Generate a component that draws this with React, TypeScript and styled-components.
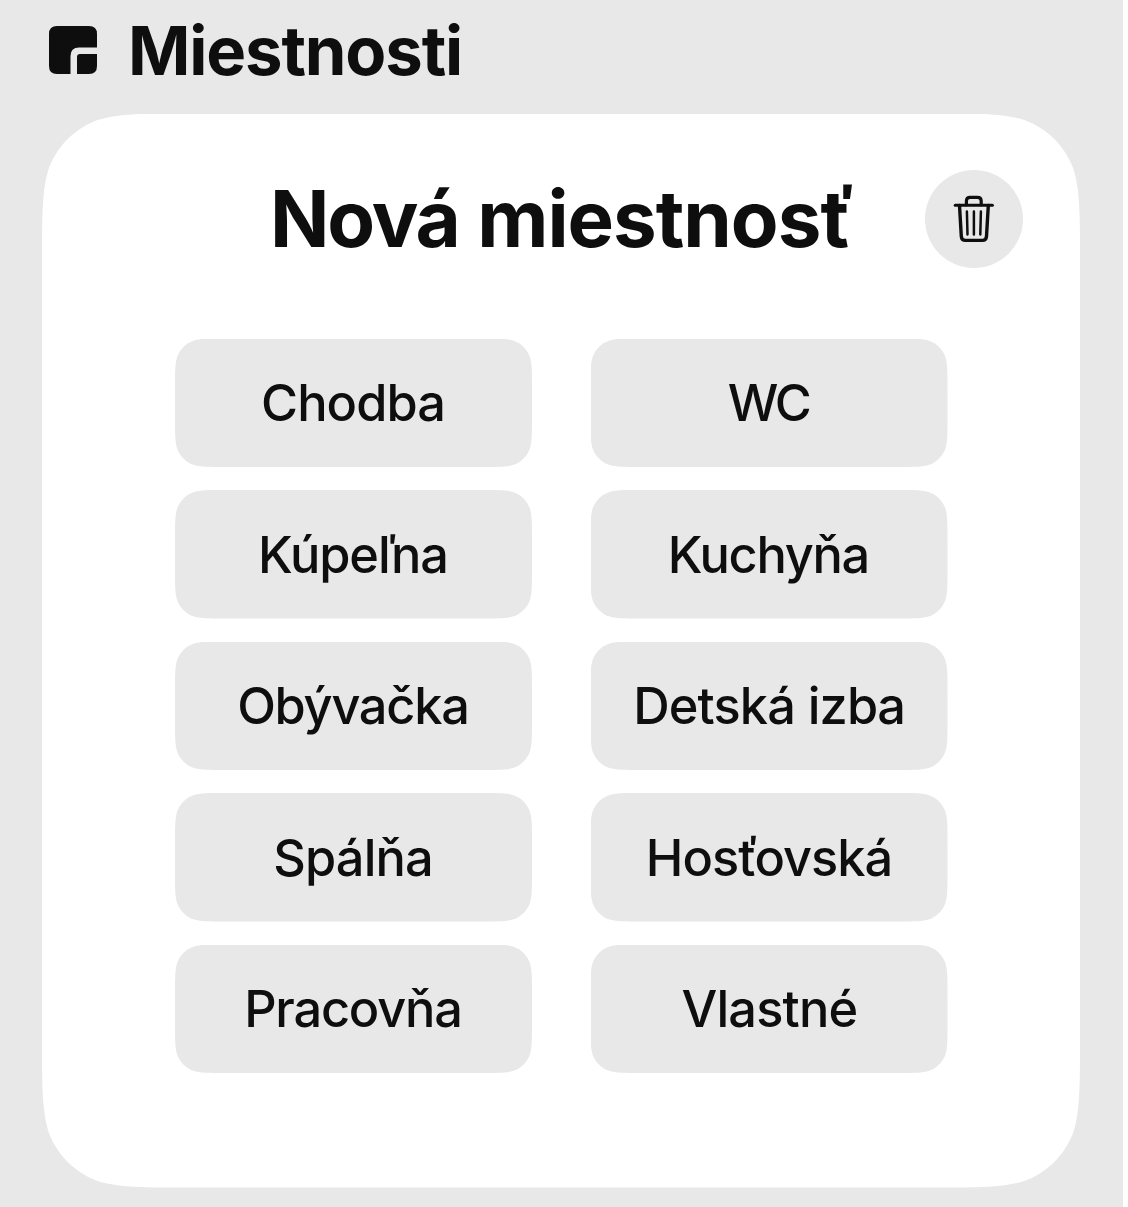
import React from "react";
import styled, { createGlobalStyle } from "styled-components";

const INK = "#0e0e0e";
const GRAY = "#e8e8e8";

/** Path of a rectangle with continuous (squircle-like) corners. */
function continuousRect(w: number, h: number, r: number): string {
  const corner: [number, number][] = [
    [1.7, 0],
    [1.16, 0],
    [0.868, 0],
    [0.63149, 0.07491],
    [0.37282, 0.16906],
    [0.16906, 0.37282],
    [0.07491, 0.63149],
    [0, 0.868],
    [0, 1.16],
    [0, 1.7],
  ];
  const build = (flipX: boolean, flipY: boolean, reverse: boolean) => {
    const list = reverse ? [...corner].reverse() : corner;
    return list.map(([x, y]) => {
      const px = flipX ? w - x * r : x * r;
      const py = flipY ? h - y * r : y * r;
      return `${px.toFixed(2)} ${py.toFixed(2)}`;
    });
  };
  const parts = [
    build(true, false, false),
    build(true, true, true),
    build(false, true, false),
    build(false, false, true),
  ].map((p, i) => `${i ? "L" : "M"}${p[0]}C${p.slice(1).join(" ")}`);
  return `path("${parts.join("")}Z")`;
}

const GlobalStyle = createGlobalStyle`
  body {
    margin: 0;
    background: #fff;
    overflow: hidden;
  }
`;

const Page = styled.main`
  box-sizing: border-box;
  width: 1123px;
  height: 1207px;
  padding-left: 42px;
  background: ${GRAY};
  color: ${INK};
  font-family: Inter, "Liberation Sans", sans-serif;
`;

const Header = styled.header`
  display: flex;
  align-items: center;
  height: 113.5px;
  box-sizing: border-box;
  padding: 0 0 13px 6.5px;
  gap: 30.5px;
`;

const SectionTitle = styled.h1`
  margin: 0;
  padding-top: 2px;
  font-size: 67px;
  line-height: 80px;
  font-weight: 700;
  letter-spacing: -1.15px;
  white-space: nowrap;
`;

const Card = styled.section`
  box-sizing: border-box;
  width: 1038px;
  height: 1074px;
  padding: 56.5px 57px 0 133px;
  background: #fff;
  clip-path: ${continuousRect(1038, 1074, 88)};
`;

const CardHeader = styled.div`
  display: flex;
  align-items: center;
  justify-content: space-between;
  height: 98px;
  padding-left: 95px;
  margin-bottom: 70.5px;
`;

const CardTitle = styled.h2`
  margin: 0;
  font-size: 78px;
  line-height: 98px;
  font-weight: 700;
  white-space: nowrap;
`;

const Tracked = styled.span<{ $tracking: number }>`
  letter-spacing: ${(p) => p.$tracking}px;
`;

const IconButton = styled.button`
  display: grid;
  place-items: center;
  width: 98px;
  height: 98px;
  padding: 0;
  border: 0;
  border-radius: 50%;
  background: ${GRAY};
  color: ${INK};
`;

const RoomGrid = styled.div`
  display: grid;
  grid-template-columns: 357px 357px;
  column-gap: 58.5px;
  row-gap: 23px;
`;

const RoomButton = styled.button<{ $tracking: number }>`
  height: 128.5px;
  padding: 1px 0 0;
  border: 0;
  background: ${GRAY};
  color: ${INK};
  clip-path: ${continuousRect(357, 128.5, 29)};
  font: 500 50.5px/60px Inter, "Liberation Sans", sans-serif;
  letter-spacing: ${(p) => p.$tracking}px;
  text-indent: ${(p) => p.$tracking}px;
  white-space: nowrap;
`;

const rooms: { id: string; label: React.ReactNode; tracking: number }[] = [
  { id: "hall", label: "Chodba", tracking: -0.95 },
  { id: "wc", label: <>W<Tracked $tracking={-5}>C</Tracked></>, tracking: -3.5 },
  { id: "bath", label: <>Kúpe<Tracked $tracking={-5}>ľ</Tracked>na</>, tracking: -1.1 },
  { id: "kitchen", label: "Kuchyňa", tracking: -1.3 },
  { id: "living", label: "Obývačka", tracking: -1.25 },
  { id: "kids", label: <>Detská izb<Tracked $tracking={-2}>a</Tracked></>, tracking: -0.85 },
  { id: "bedroom", label: "Spálňa", tracking: -0.85 },
  { id: "guest", label: <>Hos<Tracked $tracking={-4}>ť</Tracked>ovsk<Tracked $tracking={-2}>á</Tracked></>, tracking: -0.95 },
  { id: "office", label: "Pracovňa", tracking: -1.2 },
  { id: "custom", label: <>Vlastn<Tracked $tracking={-2.5}>é</Tracked></>, tracking: -0.85 },
];

const RoomsIcon = () => (
  <svg width="49" height="49" viewBox="0.5 0.5 49 49" fill="currentColor" aria-hidden="true">
    <path d="M8.5 0.5H40.5Q48.5 0.5 48.5 8.5V22H30.5Q22 22 22 30.5V48.5H8.5Q0.5 48.5 0.5 40.5V8.5Q0.5 0.5 8.5 0.5Z" />
    <path d="M31.5 28.5H48.5V40.5Q48.5 48.5 40.5 48.5H28.5V31.5Q28.5 28.5 31.5 28.5Z" />
  </svg>
);

const TrashIcon = () => (
  <svg
    width="42"
    height="50"
    viewBox="0 0 42 50"
    fill="none"
    stroke="currentColor"
    strokeLinecap="round"
    strokeLinejoin="round"
    aria-hidden="true"
  >
    <path strokeWidth="3" d="M2.2 11.3H39.4" />
    <path strokeWidth="3.2" d="M13.4 10.8V7Q13.4 3.3 17.1 3.3H24.5Q28.2 3.3 28.2 7V10.8" />
    <path strokeWidth="3.4" d="M6.5 11.5L8.3 42.3Q8.6 46.4 12.5 46.4H29.3Q33.2 46.4 33.5 42.3L35.3 11.5" />
    <path strokeWidth="2.5" d="M13.9 17.6L14.5 40.4M20.9 17.6V40.4M27.9 17.6L27.3 40.4" />
  </svg>
);

export default function App() {
  return (
    <>
      <GlobalStyle />
      <Page>
        <Header>
          <RoomsIcon />
          <SectionTitle>Miestnosti</SectionTitle>
        </Header>
        <Card>
          <CardHeader>
            <CardTitle>
              <Tracked $tracking={-2.1}>Nová</Tracked>{" "}
              <Tracked $tracking={-1}>miestnosť</Tracked>
            </CardTitle>
            <IconButton type="button" aria-label="Odstrániť">
              <TrashIcon />
            </IconButton>
          </CardHeader>
          <RoomGrid>
            {rooms.map((room) => (
              <RoomButton key={room.id} type="button" $tracking={room.tracking}>
                {room.label}
              </RoomButton>
            ))}
          </RoomGrid>
        </Card>
      </Page>
    </>
  );
}
